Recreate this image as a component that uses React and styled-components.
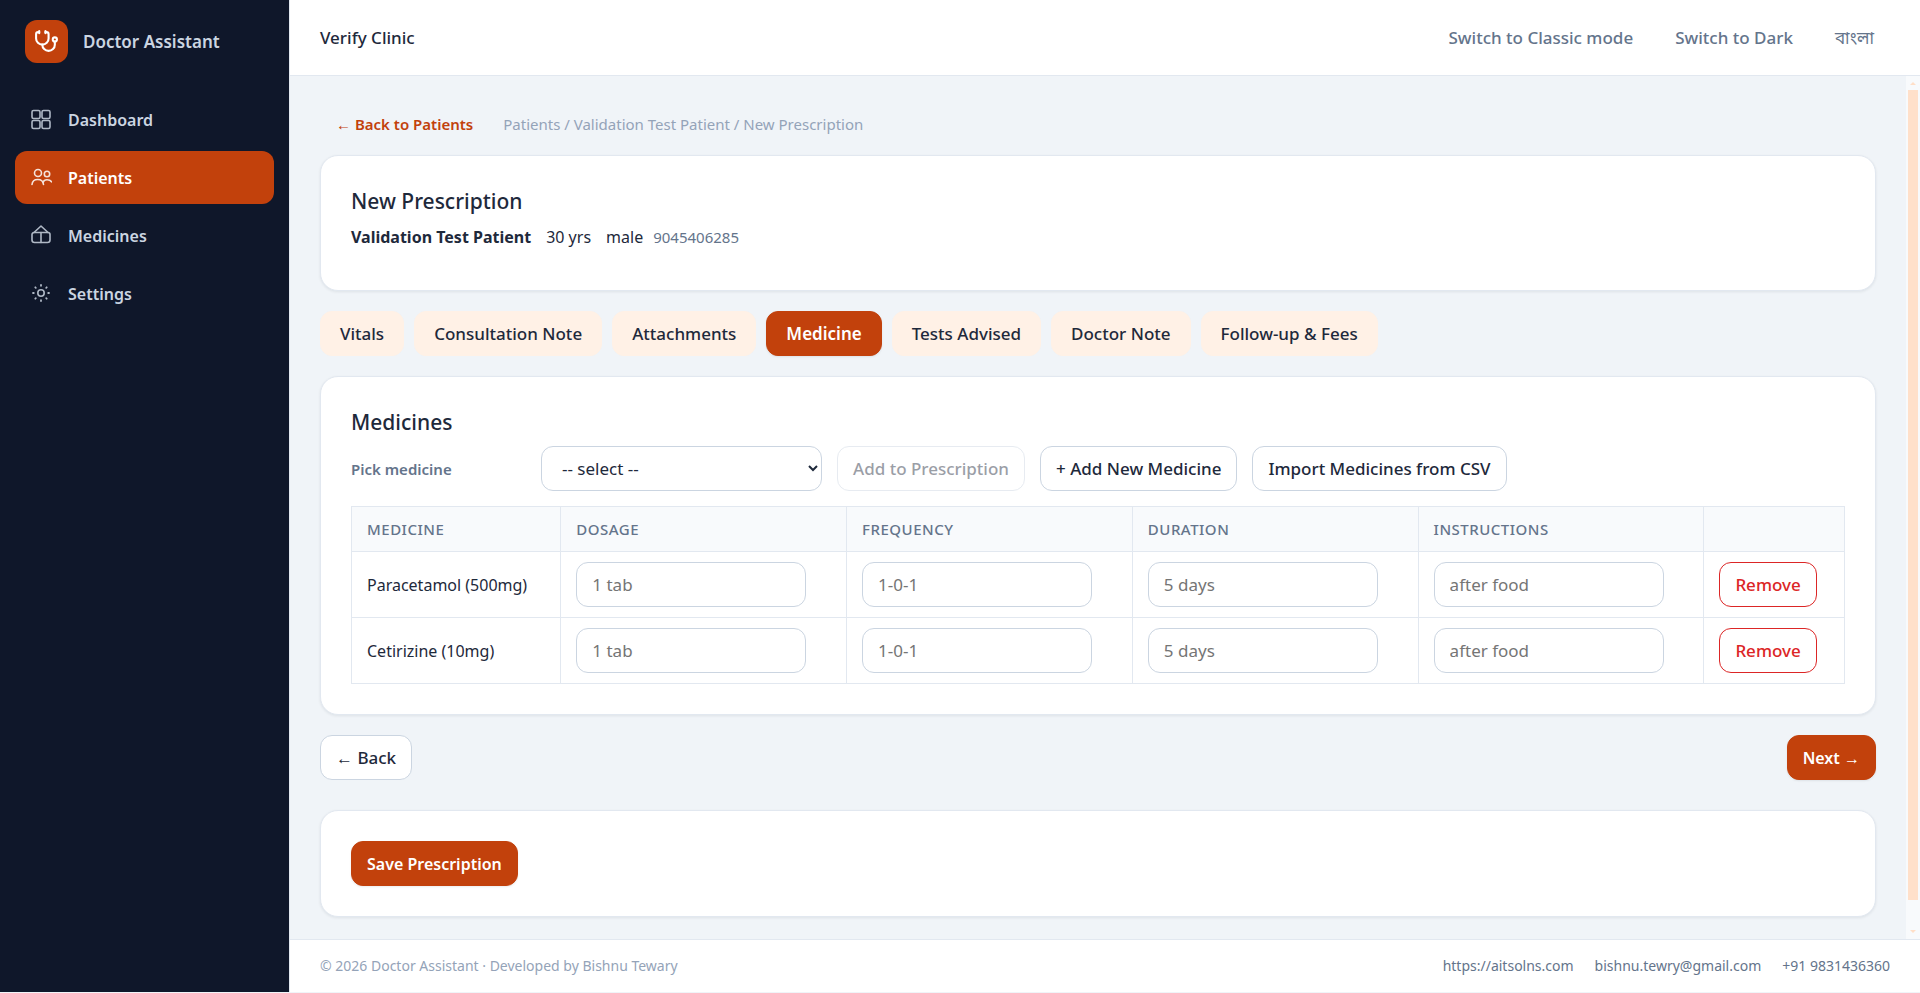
import React, { useState } from 'react';
import styled, { css, createGlobalStyle } from 'styled-components';
import { Stethoscope } from 'lucide-react';

const GlobalStyle = createGlobalStyle`
    *, *::before, *::after {
        box-sizing: border-box;
    }

    body {
        margin: 0;
        background: #f0f4f8;
        color: #1e293b;
        font-family: "Noto Sans", "Open Sans", "Noto Sans Bengali", sans-serif;
        font-size: 16px;
        line-height: 24px;
    }

    button, input, select {
        font: inherit;
        color: inherit;
    }

    a {
        color: inherit;
        text-decoration: none;
    }
`;

const Shell = styled.div`
    display: grid;
    grid-template-columns: 290px minmax(0, 1fr);
    height: 100vh;
    padding-bottom: 1px;
`;

const Sidebar = styled.aside`
    padding: 20px 15px;
    background: #0f172a;
    border-right: 1px solid #e2e8f0;
`;

const Brand = styled.div`
    display: flex;
    align-items: center;
    gap: 15px;
    padding: 0 10px;
    color: #cbd5e1;
    font-size: 17px;
    font-weight: 600;
`;

const Logo = styled.span`
    display: grid;
    place-items: center;
    width: 43px;
    height: 43px;
    border-radius: 12px;
    background: #c2410c;
    color: #fff;
`;

const Nav = styled.nav`
    display: flex;
    flex-direction: column;
    gap: 5px;
    margin-top: 30px;
`;

const NavLink = styled.a`
    display: flex;
    align-items: center;
    gap: 16px;
    height: 53px;
    padding: 0 15px;
    border-radius: 12px;
    color: #cbd5e1;
    font-weight: 600;

    svg {
        opacity: 0.85;
    }

    ${({ $active }) => $active && css`
        background: #c2410c;
        color: #fff;
    `}
`;

const Page = styled.div`
    display: flex;
    flex-direction: column;
    min-width: 0;
    min-height: 0;
`;

const Header = styled.header`
    display: flex;
    align-items: center;
    justify-content: space-between;
    flex: 0 0 76px;
    padding: 0 30px;
    background: #fff;
    border-bottom: 1px solid #e2e8f0;
    font-size: 17px;
`;

const Clinic = styled.div`
    font-weight: 500;
`;

const HeaderActions = styled.div`
    display: flex;
    gap: 10px;
`;

const GhostButton = styled.button`
    padding: 0 16px;
    border: 0;
    background: none;
    color: #64748b;
    font-weight: 500;
    cursor: pointer;

    &:lang(bn) {
        font-weight: 400;
    }
`;

const Body = styled.div`
    display: flex;
    flex: 1;
    min-height: 0;
`;

const Main = styled.main`
    flex: 1;
    min-width: 0;
    padding: 36px 30px 80px;
    overflow-y: auto;
    scrollbar-width: none;
`;

const ScrollBar = styled.div`
    display: flex;
    flex-direction: column;
    align-items: center;
    width: 14px;
    background: #f8fafc;

    svg {
        display: block;
        width: 14px;
        height: 14px;
        fill: #ffdfc8;
    }
`;

const ScrollTrack = styled.div`
    flex: 1;
    width: 10px;
`;

const ScrollThumb = styled.div`
    height: 97%;
    background: #ffe0ca;
`;

const Crumbs = styled.div`
    display: flex;
    gap: 30px;
    margin-bottom: 19px;
    padding-left: 16px;
    color: #94a3b8;
    font-size: 15px;
`;

const BackLink = styled.a`
    color: #c2410c;
    font-weight: 600;
`;

const Card = styled.section`
    padding: 30px;
    margin-bottom: 20px;
    background: #fff;
    border: 1px solid #e2e8f0;
    border-radius: 18px;
    box-shadow: 0 1px 3px rgba(15, 23, 42, 0.08);
`;

const Title = styled.h2`
    margin: 0 0 9px;
    font-size: 21px;
    font-weight: 500;
    line-height: 30px;
`;

const Patient = styled.div`
    display: flex;
    align-items: baseline;
    gap: 15px;
    min-height: 35px;

    small {
        margin-left: -5px;
        color: #64748b;
        font-size: 15px;
    }
`;

const Button = styled.button`
    height: 45px;
    padding: 0 15px;
    border: 1px solid #cbd5e1;
    border-radius: 12px;
    background: #fff;
    font-size: 17px;
    font-weight: 500;
    white-space: nowrap;
    cursor: pointer;

    &:disabled {
        opacity: 0.45;
        cursor: default;
    }

    ${({ $primary }) => $primary && css`
        border-color: #c2410c;
        background: #c2410c;
        color: #fff;
        font-size: 16px;
        font-weight: 600;
        box-shadow: 0 1px 2px rgba(15, 23, 42, 0.08);
    `}

    ${({ $danger }) => $danger && css`
        border-color: #dc2626;
        color: #dc2626;
    `}
`;

const Tabs = styled.div`
    display: flex;
    flex-wrap: wrap;
    gap: 10px;
    margin-bottom: 20px;
`;

const Tab = styled(Button)`
    padding: 0 19px;
    border-color: ${({ $primary }) => ($primary ? '#c2410c' : '#fff1e6')};
    background: ${({ $primary }) => ($primary ? '#c2410c' : '#fff1e6')};
    font-size: 17px;
`;

const Picker = styled.div`
    display: flex;
    flex-wrap: wrap;
    align-items: center;
    gap: 15px;
    margin-bottom: 15px;
`;

const PickerLabel = styled.label`
    width: 175px;
    color: #64748b;
    font-size: 15px;
    font-weight: 600;
`;

const Select = styled.select`
    width: 281px;
    height: 45px;
    padding: 0 16px;
    border: 1px solid #cbd5e1;
    border-radius: 12px;
    background: #fff;
    font-size: 17px;
`;

const Table = styled.table`
    width: 100%;
    border-collapse: collapse;

    th, td {
        padding: 10px 15px;
        border: 1px solid #e2e8f0;
        text-align: left;
    }

    th {
        background: #f8fafc;
        color: #64748b;
        font-size: 15px;
        font-weight: 500;
        letter-spacing: 0.5px;
        text-transform: uppercase;
    }

    td:first-child {
        white-space: nowrap;
    }
`;

const Input = styled.input`
    display: block;
    width: 230px;
    height: 45px;
    padding: 0 15px;
    border: 1px solid #cbd5e1;
    border-radius: 12px;
    background: #fff;
    font-size: 17px;

    &::placeholder {
        color: #757575;
    }
`;

const Steps = styled.div`
    display: flex;
    justify-content: space-between;
    margin-bottom: 30px;
`;

const Footer = styled.footer`
    display: flex;
    align-items: center;
    justify-content: space-between;
    flex: 0 0 53px;
    padding: 0 30px;
    background: #fff;
    border-top: 1px solid #e2e8f0;
    color: #94a3b8;
    font-size: 14px;
`;

const Contacts = styled.div`
    display: flex;
    gap: 21px;
    color: #64748b;
`;

const NavIcon = ({ children }) => (
    <svg width="22" height="22" viewBox="0 0 22 22" fill="none" stroke="currentColor" strokeWidth="1.6" strokeLinecap="round" strokeLinejoin="round">
        {children}
    </svg>
);

const navItems = [{
    label: 'Dashboard',
    icon: <>
        <rect x="2" y="1.5" width="8" height="8" rx="1.5" />
        <rect x="12" y="1.5" width="8" height="8" rx="1.5" />
        <rect x="2" y="11.5" width="8" height="8" rx="1.5" />
        <rect x="12" y="11.5" width="8" height="8" rx="1.5" />
    </>
}, {
    label: 'Patients',
    icon: <>
        <circle cx="8" cy="6" r="3.5" />
        <circle cx="17" cy="7" r="2.7" />
        <path d="M2 17.5c.3-3.2 2.500-5 5.700-5s5.500 1.800 5.800 5" />
        <path d="M13 15.500c.6-1.700 2.200-2.700 4-2.700 2.200 0 3.700.7 4.500 2" />
    </>
}, {
    label: 'Medicines',
    icon: <>
        <path d="M4 7.500h14a2 2 0 0 1 2 2V15a2.500 2.500 0 0 1-2.500 2.500h-13A2.500 2.500 0 0 1 2 15V9.500a2 2 0 0 1 2-2z" />
        <path d="M4 7.500L11 1l7 6.500M11 7.500v10" />
    </>
}, {
    label: 'Settings',
    icon: <>
        <circle cx="11" cy="10" r="3.2" />
        <path strokeWidth="1.8" d="M11 2v.8M11 17.200v.8M3 10h.8M18.200 10h.8M5.300 4.300l.5.5M16.200 15.200l.5.5M5.300 15.700l.5-.5M16.200 4.800l.5-.5" />
    </>
}];

const tabs = [
    'Vitals', 'Consultation Note', 'Attachments', 'Medicine',
    'Tests Advised', 'Doctor Note', 'Follow-up & Fees'
];

const fields = [
    { name: 'Dosage', placeholder: '1 tab' },
    { name: 'Frequency', placeholder: '1-0-1' },
    { name: 'Duration', placeholder: '5 days' },
    { name: 'Instructions', placeholder: 'after food' },
];

export default function App() {
    const [tab, setTab] = useState('Medicine');
    const [picked, setPicked] = useState('');
    const [medicines, setMedicines] = useState(['Paracetamol (500mg)', 'Cetirizine (10mg)']);

    const handleRemove = name => setMedicines(medicines.filter(i => i !== name));

    return (
        <Shell>
            <GlobalStyle />
            <Sidebar>
                <Brand>
                    <Logo><Stethoscope size={25} /></Logo>
                    Doctor Assistant
                </Brand>
                <Nav>
                    {navItems.map(i => (
                        <NavLink key={i.label} href="#" $active={i.label === 'Patients'}>
                            <NavIcon>{i.icon}</NavIcon>
                            {i.label}
                        </NavLink>
                    ))}
                </Nav>
            </Sidebar>
            <Page>
                <Header>
                    <Clinic>Verify Clinic</Clinic>
                    <HeaderActions>
                        <GhostButton>Switch to Classic mode</GhostButton>
                        <GhostButton>Switch to Dark</GhostButton>
                        <GhostButton lang="bn">বাংলা</GhostButton>
                    </HeaderActions>
                </Header>
                <Body>
                    <Main>
                        <Crumbs>
                            <BackLink href="#">← Back to Patients</BackLink>
                            <span>Patients / Validation Test Patient / New Prescription</span>
                        </Crumbs>
                        <Card>
                            <Title>New Prescription</Title>
                            <Patient>
                                <strong>Validation Test Patient</strong>
                                <span>30 yrs</span>
                                <span>male</span>
                                <small>9045406285</small>
                            </Patient>
                        </Card>
                        <Tabs>
                            {tabs.map(i => (
                                <Tab key={i} $primary={i === tab} onClick={() => setTab(i)}>{i}</Tab>
                            ))}
                        </Tabs>
                        <Card>
                            <Title>Medicines</Title>
                            <Picker>
                                <PickerLabel htmlFor="medicine">Pick medicine</PickerLabel>
                                <Select id="medicine" value={picked} onChange={e => setPicked(e.target.value)}>
                                    <option value="">-- select --</option>
                                </Select>
                                <Button disabled={!picked}>Add to Prescription</Button>
                                <Button>+ Add New Medicine</Button>
                                <Button>Import Medicines from CSV</Button>
                            </Picker>
                            <Table>
                                <thead>
                                    <tr>
                                        <th>Medicine</th>
                                        {fields.map(f => <th key={f.name}>{f.name}</th>)}
                                        <th></th>
                                    </tr>
                                </thead>
                                <tbody>
                                    {medicines.map(name => (
                                        <tr key={name}>
                                            <td>{name}</td>
                                            {fields.map(f => (
                                                <td key={f.name}>
                                                    <Input aria-label={`${f.name} ${name}`} placeholder={f.placeholder} />
                                                </td>
                                            ))}
                                            <td><Button $danger onClick={() => handleRemove(name)}>Remove</Button></td>
                                        </tr>
                                    ))}
                                </tbody>
                            </Table>
                        </Card>
                        <Steps>
                            <Button>← Back</Button>
                            <Button $primary>Next →</Button>
                        </Steps>
                        <Card>
                            <Button $primary>Save Prescription</Button>
                        </Card>
                    </Main>
                    <ScrollBar aria-hidden="true">
                        <svg viewBox="0 0 14 14"><path d="M4 9l3-3 3 3z" /></svg>
                        <ScrollTrack><ScrollThumb /></ScrollTrack>
                        <svg viewBox="0 0 14 14"><path d="M4 5l3 3 3-3z" /></svg>
                    </ScrollBar>
                </Body>
                <Footer>
                    <span>© 2026 Doctor Assistant · Developed by Bishnu Tewary</span>
                    <Contacts>
                        <a href="#">https://aitsolns.com</a>
                        <a href="#">bishnu.tewry@gmail.com</a>
                        <a href="#">+91 9831436360</a>
                    </Contacts>
                </Footer>
            </Page>
        </Shell>
    );
}
